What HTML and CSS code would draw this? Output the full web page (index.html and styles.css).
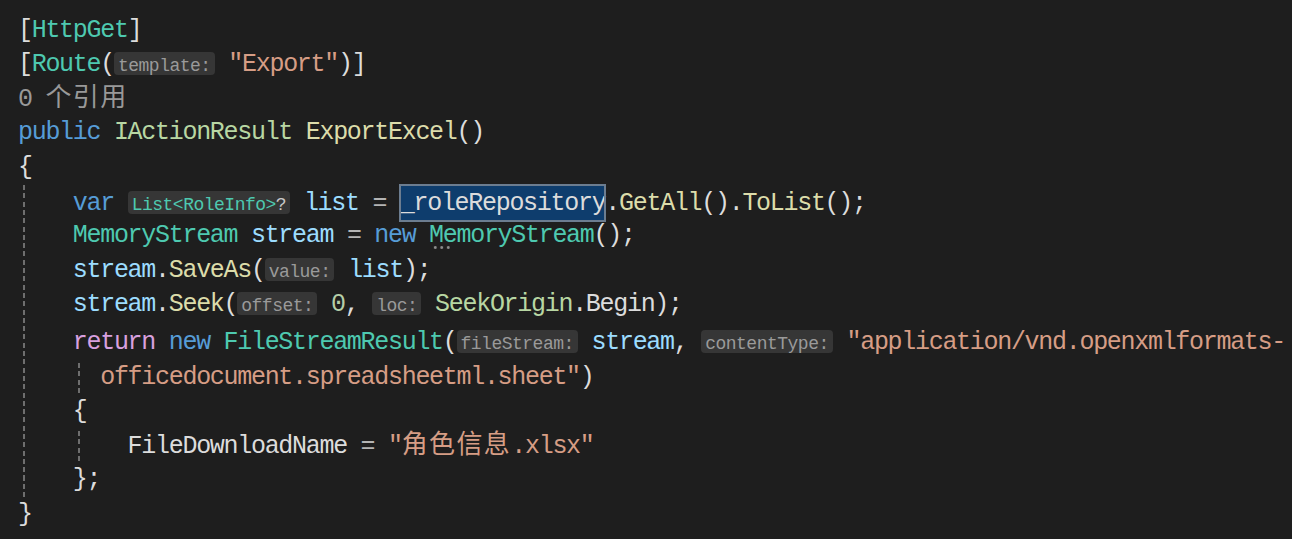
FILE: index.html
```html
<!DOCTYPE html>
<html lang="zh-CN">
<head>
<meta charset="utf-8">
<title>ExportExcel</title>
<link rel="stylesheet" href="styles.css">
</head>
<body>
<div class="editor">
<div class="line">[<span class="t">HttpGet</span>]</div>
<div class="line">[<span class="t">Route</span>(<span class="hint">template:</span> <span class="s">"Export"</span>)]</div>
<div class="line lens">0 <span class="cjk">个引用</span></div>
<div class="line"><span class="k">public</span> <span class="i">IActionResult</span> <span class="m">ExportExcel</span>()</div>
<div class="line">{</div>
<div class="block">
<div class="line">    <span class="k">var</span> <span class="hint"><span class="t">List&lt;RoleInfo&gt;</span><span class="q">?</span></span> <span class="v">list</span> <span class="op">=</span> <span class="sel">_roleRepository</span>.<span class="m">GetAll</span>().<span class="m">ToList</span>();</div>
<div class="line">    <span class="t">MemoryStream</span> <span class="v">stream</span> <span class="op">=</span> <span class="k">new</span> <span class="t"><span class="dots">Me</span>moryStream</span>();</div>
<div class="line">    <span class="v">stream</span>.<span class="m">SaveAs</span>(<span class="hint">value:</span> <span class="v">list</span>);</div>
<div class="line">    <span class="v">stream</span>.<span class="m">Seek</span>(<span class="hint">offset:</span> <span class="n">0</span>, <span class="hint">loc:</span> <span class="i">SeekOrigin</span>.Begin);</div>
<div class="line l10">    <span class="c">return</span> <span class="k">new</span> <span class="t">FileStreamResult</span>(<span class="hint">fileStream:</span> <span class="v">stream</span>, <span class="hint">contentType:</span> <span class="s">"application/vnd.openxmlformats-</span></div>
<div class="line g2">      <span class="s">officedocument.spreadsheetml.sheet"</span>)</div>
<div class="line">    {</div>
<div class="line g2">        FileDownloadName <span class="op">=</span> <span class="s">"<span class="cjk">角色信息</span>.xlsx"</span></div>
<div class="line">    };</div>
</div>
<div class="line">}</div>
</div>
</body>
</html>
```
FILE: styles.css
```css
html, body {
  margin: 0;
  padding: 0;
  background: #1e1e1e;
}

.editor {
  padding: 13.6px 0 0 18px;
  font-family: "Liberation Mono", "Noto Sans CJK SC", monospace;
  font-size: 25px;
  letter-spacing: -1.3px;
  color: #dcdcdc;
}

.line {
  position: relative;
  height: 34.3px;
  line-height: 34.3px;
  white-space: pre;
}

.l10 {
  margin-top: 4px;
}

.block {
  position: relative;
}

.block::before {
  content: "";
  position: absolute;
  left: 5.3px;
  top: 0;
  bottom: 0;
  width: 2px;
  background: repeating-linear-gradient(to bottom, #6e6e6e 0 5px, transparent 5px 8.3px);
}

.g2::before {
  content: "";
  position: absolute;
  left: 60.3px;
  top: 2px;
  bottom: 0;
  width: 2px;
  background: repeating-linear-gradient(to bottom, #6e6e6e 0 5px, transparent 5px 8.3px);
}

.cjk {
  font-size: 26px;
  letter-spacing: 1.4px;
}

.lens { color: #999999; }
.t { color: #4ec9b0; }
.i { color: #b8d7a3; }
.m { color: #dcdcaa; }
.k { color: #569cd6; }
.c { color: #d8a0df; }
.v { color: #9cdcfe; }
.s { color: #d69d85; }
.n { color: #b5cea8; }
.op { color: #b4b4b4; }
.q { color: #c8c8c8; }

.hint {
  display: inline-block;
  height: 18px;
  line-height: 18px;
  padding: 5px 4px 0;
  font-size: 18px;
  letter-spacing: -0.5px;
  color: #9a9a9a;
  background: #363636;
  border-radius: 4px;
}

.sel {
  display: inline-block;
  padding-top: 2px;
  line-height: 34.3px;
  background: #0e3d6d;
  outline: 2px solid #6c7d90;
  outline-offset: -1px;
}

.dots {
  position: relative;
}

.dots::after {
  content: "";
  position: absolute;
  left: 3px;
  bottom: 1.5px;
  width: 19.5px;
  height: 3px;
  background: radial-gradient(circle, #8c8c8c 1.2px, transparent 1.6px) 0 0 / 6.5px 3px repeat-x;
}
```
